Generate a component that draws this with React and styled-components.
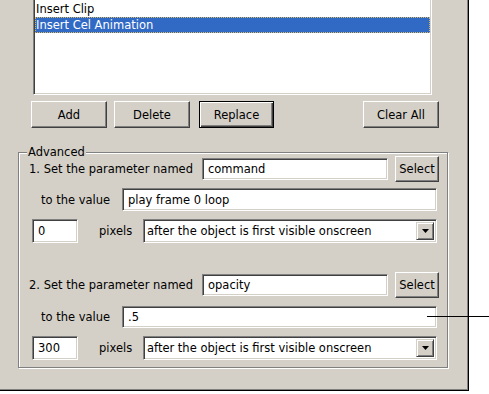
import React from "react";
import styled, { createGlobalStyle, css } from "styled-components";

const face = "#d4d0c8";
const shadow = "#808080";
const dark = "#404040";

const GlobalStyle = createGlobalStyle`
  html, body {
    margin: 0;
    padding: 0;
    background: #fff;
  }
  body {
    font-family: "DejaVu Sans", Verdana, sans-serif;
    font-size: 11.5px;
    color: #000;
  }
`;

const Page = styled.div`
  position: relative;
  width: 489px;
  height: 394px;
  overflow: hidden;
`;

const Panel = styled.div`
  box-sizing: border-box;
  width: 469px;
  height: 391px;
  background: ${face};
  border-right: 1px solid #000;
  border-bottom: 1px solid #000;
  box-shadow: inset -1px -1px 0 ${shadow};
  display: flex;
  flex-direction: column;
`;

const ListBox = styled.ul`
  box-sizing: border-box;
  list-style: none;
  margin: 0 0 0 33px;
  padding: 1px 1px 1px 1px;
  width: 399px;
  height: 95px;
  background: #fff;
  border-left: 1px solid ${shadow};
  border-right: 1px solid #fff;
  border-bottom: 1px solid #fff;
  box-shadow: inset 1px 0 0 ${dark}, inset -1px -1px 0 ${face};
`;

const Item = styled.li`
  box-sizing: border-box;
  height: 16px;
  line-height: 14px;
  white-space: nowrap;
  border: 1px dotted transparent;
  ${(p) =>
    p.$selected &&
    css`
      background: #316ac5;
      color: #fff;
      border-color: #d8b860;
    `}
`;

const ButtonRow = styled.div`
  display: flex;
  margin: 6px 0 0 31px;
  width: 408px;
`;

const Button = styled.button`
  box-sizing: border-box;
  width: ${(p) => p.$w || 76}px;
  height: ${(p) => p.$h || 27}px;
  margin-left: ${(p) => (p.$push ? "auto" : `${p.$ml || 0}px`)};
  padding: 0;
  font: inherit;
  color: #000;
  background: ${face};
  border: 1px solid;
  border-color: #fff ${dark} ${dark} #fff;
  box-shadow: inset -1px -1px 0 ${shadow};
  flex: none;
  ${(p) =>
    p.$default &&
    css`
      border-color: #000;
      box-shadow: inset 1px 1px 0 #fff, inset -1px -1px 0 ${dark},
        inset -2px -2px 0 ${shadow};
    `}
`;

const Group = styled.fieldset`
  box-sizing: border-box;
  min-width: 0;
  width: 430px;
  margin: 18px 0 0 18px;
  padding: 0 8px 7px 10px;
  border: 1px solid ${shadow};
  box-shadow: inset 1px 1px 0 #fff, 1px 1px 0 #fff;
`;

const Legend = styled.legend`
  margin-left: -2px;
  padding: 0 1px;
  line-height: 12px;
  background: ${face};
`;

const Row = styled.div`
  display: flex;
  align-items: center;
  height: ${(p) => p.$h}px;
  margin-top: ${(p) => p.$mt}px;
`;

const Label = styled.span`
  box-sizing: border-box;
  flex: none;
  width: ${(p) => p.$w}px;
  padding-left: ${(p) => p.$pl || 0}px;
  white-space: nowrap;
`;

const sunken = css`
  box-sizing: border-box;
  background: #fff;
  border: 1px solid;
  border-color: ${shadow} #fff #fff ${shadow};
  box-shadow: inset 1px 1px 0 ${dark}, inset -1px -1px 0 ${face};
`;

const Field = styled.input`
  ${sunken};
  flex: ${(p) => (p.$w ? "none" : "1")};
  width: ${(p) => (p.$w ? `${p.$w}px` : "auto")};
  min-width: 0;
  height: ${(p) => p.$h || 22}px;
  margin: 0 ${(p) => p.$mr || 0}px 0 ${(p) => p.$ml || 0}px;
  padding: 0 4px 0 5px;
  font: inherit;
  color: #000;
  outline: none;
`;

const Gap = styled.span`
  flex: none;
  width: ${(p) => p.$w}px;
`;

const Dropdown = styled.div`
  ${sunken};
  flex: 1;
  display: flex;
  align-items: stretch;
  height: 24px;
  margin-right: 2px;
  padding: 2px;
`;

const DropText = styled.span`
  flex: 1;
  display: flex;
  align-items: center;
  padding-left: 1px;
  white-space: nowrap;
  overflow: hidden;
`;

const DropButton = styled.span`
  box-sizing: border-box;
  flex: none;
  width: 18px;
  display: flex;
  align-items: center;
  justify-content: center;
  background: ${face};
  border: 1px solid;
  border-color: ${face} ${dark} ${dark} ${face};
  box-shadow: inset 1px 1px 0 #fff, inset -1px -1px 0 ${shadow};
`;

const Leader = styled.div`
  position: absolute;
  left: 427px;
  top: 316px;
  width: 62px;
  height: 1px;
  background: #000;
`;

const Arrow = () => (
  <svg width="7" height="4" viewBox="0 0 7 4">
    <path d="M0 0h7L3.5 4z" fill="#000" />
  </svg>
);

const Select = ({ children }) => (
  <Dropdown>
    <DropText>{children}</DropText>
    <DropButton>
      <Arrow />
    </DropButton>
  </Dropdown>
);

const ParamSet = ({ index, name, value, offset, first }) => (
  <>
    <Row $h={26} $mt={first ? -2 : 29}>
      <Label $w={173}>{index}. Set the parameter named</Label>
      <Field defaultValue={name} readOnly />
      <Gap $w={7} />
      <Button $w={44} $h={26}>Select</Button>
    </Row>
    <Row $h={23} $mt={first ? 6 : 7}>
      <Label $w={93} $pl={12}>to the value</Label>
      <Field defaultValue={value} readOnly $h={first ? 23 : 22} $mr={2} />
    </Row>
    <Row $h={24} $mt={8}>
      <Field defaultValue={offset} readOnly $w={46} $h={24} $ml={3} />
      <Label $w={65} $pl={21}>pixels</Label>
      <Select>after the object is first visible onscreen</Select>
    </Row>
  </>
);

export default function App() {
  return (
    <Page>
      <GlobalStyle />
      <Panel>
        <ListBox>
          <Item>Insert Clip</Item>
          <Item $selected>Insert Cel Animation</Item>
        </ListBox>
        <ButtonRow>
          <Button>Add</Button>
          <Button $ml={7} $w={76}>Delete</Button>
          <Button $ml={9} $w={75} $default>Replace</Button>
          <Button $push>Clear All</Button>
        </ButtonRow>
        <Group>
          <Legend>Advanced</Legend>
          <ParamSet index={1} name="command" value="play frame 0 loop" offset="0" first />
          <ParamSet index={2} name="opacity" value=".5" offset="300" />
        </Group>
      </Panel>
      <Leader />
    </Page>
  );
}
